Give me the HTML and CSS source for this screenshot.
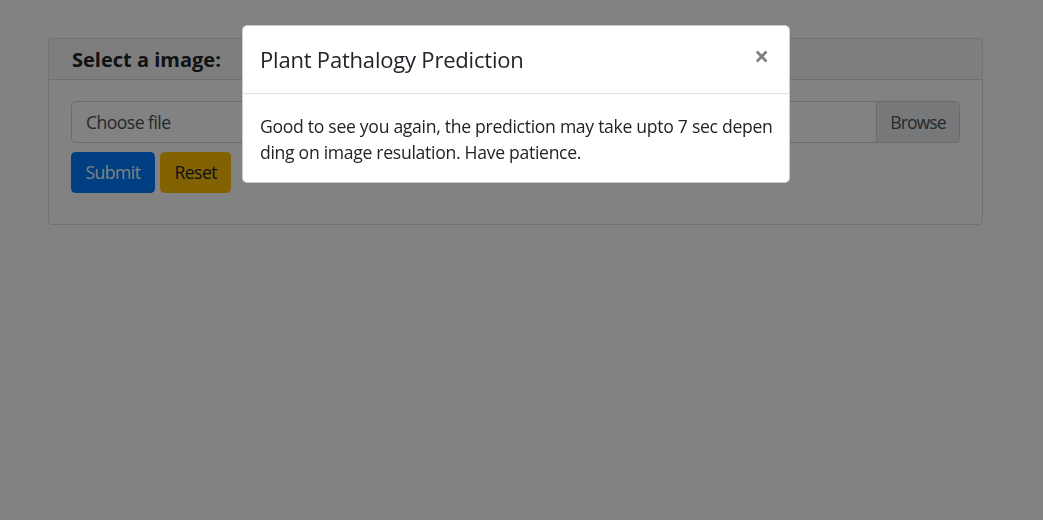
FILE: index.html
```html
<!DOCTYPE html>
<html lang="en">
<head>
<meta charset="utf-8">
<title>Plant Pathology</title>
<link rel="stylesheet" href="styles.css">
</head>
<body>
<div class="page">
  <div class="card">
    <div class="card-header">Select a image:</div>
    <div class="card-body">
      <div class="file-input">
        <span class="file-label">Choose file</span>
        <span class="file-browse">Browse</span>
      </div>
      <div class="actions">
        <button class="btn btn-primary">Submit</button>
        <button class="btn btn-warning">Reset</button>
      </div>
    </div>
  </div>
</div>
<div class="backdrop"></div>
<div class="modal">
  <div class="modal-dialog">
    <div class="modal-header">
      <h5 class="modal-title">Plant Pathalogy Prediction</h5>
      <button class="close" aria-label="Close">×</button>
    </div>
    <div class="modal-body">Good to see you again, the prediction may take upto 7 sec depen<br>ding on image resulation. Have patience.</div>
  </div>
</div>
</body>
</html>
```

FILE: styles.css
```css
* { box-sizing: border-box; }
html, body { margin: 0; height: 100%; }
body {
  font-family: "Open Sans", "Noto Sans", sans-serif;
  font-size: 17.6px;
  line-height: 1.5;
  letter-spacing: -0.55px;
  color: #212529;
  background: #fff;
  overflow: hidden;
}
.page { padding: 38px 0 0 48px; }
.card {
  width: 935px;
  border: 1px solid rgba(0,0,0,.125);
  border-radius: 4.4px;
  background: #fff;
}
.card-header {
  background: rgba(0,0,0,.03);
  border-bottom: 1px solid rgba(0,0,0,.125);
  padding: 8px 23px 7px;
  font-size: 20px;
  font-weight: 700;
  line-height: 25px;
  letter-spacing: 0;
}
.card-body { padding: 21px 22px 31px; }
.file-input {
  display: flex;
  height: 42px;
  border: 1px solid #ced4da;
  border-radius: 4.4px;
  color: #495057;
  overflow: hidden;
}
.file-label {
  flex: 1;
  padding: 0 14px;
  line-height: 40px;
}
.file-browse {
  padding: 0 13.2px;
  line-height: 40px;
  background: #e9ecef;
  border-left: 1px solid #ced4da;
  letter-spacing: -0.9px;
}
.actions { display: flex; gap: 5px; margin-top: 9px; }
.btn {
  font: inherit;
  letter-spacing: inherit;
  height: 41px;
  padding: 0 13.5px;
  border: 1px solid transparent;
  border-radius: 4.4px;
}
.btn-primary { background: #007bff; border-color: #007bff; color: #fff; }
.btn-warning { background: #ffc107; border-color: #ffc107; color: #212529; }
.backdrop {
  position: fixed;
  inset: 0;
  background: rgba(0,0,0,.49);
}
.modal { position: fixed; inset: 0; }
.modal-dialog {
  width: 548px;
  margin: 25px 0 0 242px;
  background: #fff;
  border: 1px solid rgba(0,0,0,.2);
  border-radius: 5.3px;
}
.modal-header {
  display: flex;
  align-items: flex-start;
  padding: 17px 17.6px 17px 17px;
  border-bottom: 1px solid #dee2e6;
}
.modal-title {
  margin: 0;
  font-size: 22px;
  font-weight: 500;
  line-height: 33px;
  letter-spacing: -0.2px;
}
.close {
  margin: -17.6px -17.6px -17.6px auto;
  padding: 17.6px 20px;
  background: none;
  border: 0;
  font-family: inherit;
  font-size: 26px;
  font-weight: 700;
  line-height: 1;
  color: #000;
  opacity: .5;
  text-shadow: 0 1px 0 #fff;
}
.modal-body {
  padding: 18.6px 17.6px 16.6px 17px;
  line-height: 26.4px;
  letter-spacing: -0.3px;
  white-space: nowrap;
}
```
